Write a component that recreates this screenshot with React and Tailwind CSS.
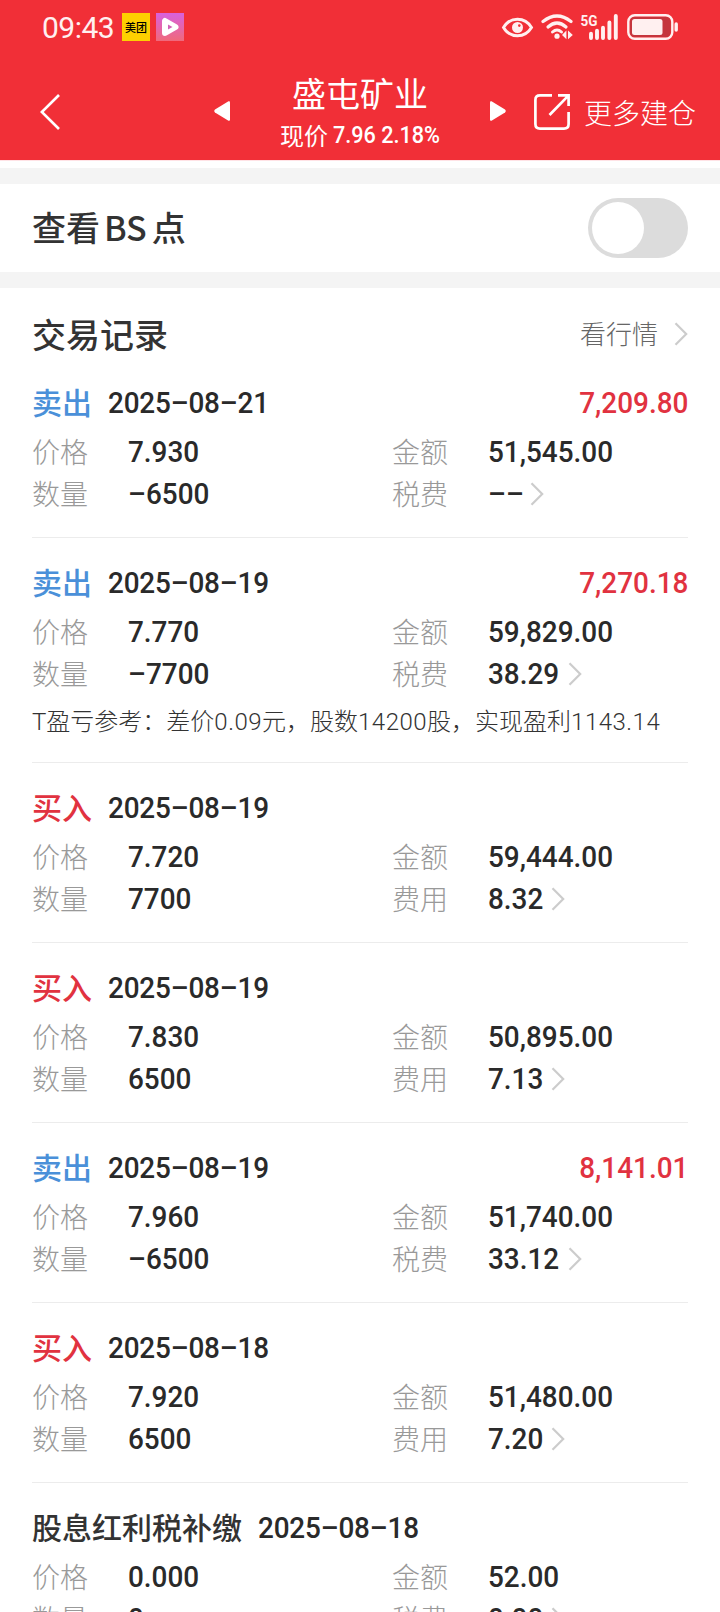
const DIGITS = "font-['Roboto','Noto_Sans_CJK_SC',sans-serif]";

const records = [
  { type: '卖出', date: '2025–08–21', profit: '7,209.80', price: '7.930', amount: '51,545.00', qty: '–6500', feeLabel: '税费', fee: '––' },
  { type: '卖出', date: '2025–08–19', profit: '7,270.18', price: '7.770', amount: '59,829.00', qty: '–7700', feeLabel: '税费', fee: '38.29', note: true },
  { type: '买入', date: '2025–08–19', price: '7.720', amount: '59,444.00', qty: '7700', feeLabel: '费用', fee: '8.32' },
  { type: '买入', date: '2025–08–19', price: '7.830', amount: '50,895.00', qty: '6500', feeLabel: '费用', fee: '7.13' },
  { type: '卖出', date: '2025–08–19', profit: '8,141.01', price: '7.960', amount: '51,740.00', qty: '–6500', feeLabel: '税费', fee: '33.12' },
  { type: '买入', date: '2025–08–18', price: '7.920', amount: '51,480.00', qty: '6500', feeLabel: '费用', fee: '7.20' },
  { type: '股息红利税补缴', date: '2025–08–18', price: '0.000', amount: '52.00', qty: '0', feeLabel: '税费', fee: '0.00' },
];

const typeColors = { 卖出: 'text-[#4a90d9]', 买入: 'text-[#e13240]' };

function Chevron({ className }) {
  return (
    <svg className={className} width="14" height="24" viewBox="0 0 14 24" fill="none" stroke="#cccccc" strokeWidth="2.2">
      <path d="M1.5 1.2 L12.2 12 L1.5 22.8" />
    </svg>
  );
}

function Num({ children, className = 'origin-left text-[#2a2a2a]' }) {
  return (
    <span className={`${DIGITS} scale-x-[0.93] pb-0.5 text-[30px] font-medium ${className}`}>
      {children}
    </span>
  );
}

function Field({ label, value, link }) {
  return (
    <div className="flex h-[42px] w-[360px] shrink-0 items-center">
      <span className="w-24 pt-[3px] text-[28px] font-light text-[#999999]">{label}</span>
      <Num>{value}</Num>
      {link && <Chevron className="ml-[3px]" />}
    </div>
  );
}

function Figure({ children }) {
  return <span className="tracking-[0.5px]">{children}</span>;
}

function Note() {
  return (
    <p className="mt-2.5 text-2xl leading-[35px] font-light whitespace-nowrap text-[#333333]">
      T盈亏参考：差价<Figure>0.09</Figure>元，股数<Figure>14200</Figure>股，实现盈利<Figure>1143.14</Figure>
    </p>
  );
}

function Record({ r }) {
  return (
    <div className="mx-8 border-b border-[#ececec] pt-[22px] pb-[22px] whitespace-nowrap">
      <div className="mb-1.5 flex h-[45px] items-center pt-0.5">
        <span className={`mr-4 text-[30px] font-medium ${typeColors[r.type] || 'text-[#333333]'}`}>{r.type}</span>
        <Num className="origin-left tracking-[-0.2px] text-[#2a2a2a]">{r.date}</Num>
        {r.profit && <Num className="ml-auto origin-right text-[#e13240]">{r.profit}</Num>}
      </div>
      <div className="flex">
        <Field label="价格" value={r.price} />
        <Field label="金额" value={r.amount} />
      </div>
      <div className="flex">
        <Field label="数量" value={r.qty} />
        <Field label={r.feeLabel} value={r.fee} link />
      </div>
      {r.note && <Note />}
    </div>
  );
}

function StatusBar() {
  return (
    <div className="flex h-[54px] items-center pr-[41px] pl-[42px] text-[#fff0f0]">
      <span className={`${DIGITS} w-20 text-[30px] tracking-[-0.5px]`}>09:43</span>
      <span className="flex size-7 items-center justify-center bg-[#fed000] text-[11px] font-medium whitespace-nowrap text-black">美团</span>
      <svg className="ml-1.5" width="28" height="28" viewBox="0 0 28 28">
        <defs>
          <linearGradient id="player" x1="0" y1="0" x2="0" y2="1">
            <stop offset="0" stopColor="#d861de" />
            <stop offset="1" stopColor="#f0697b" />
          </linearGradient>
        </defs>
        <rect width="28" height="28" fill="url(#player)" />
        <path d="M9 8 V20 L19.5 14 Z" fill="#fff" stroke="#fff" strokeWidth="6" strokeLinejoin="round" />
        <path d="M12 11.5 V16.5 L16.5 14 Z" fill="#d163b8" />
      </svg>
      <svg className="ml-auto" width="178" height="30" viewBox="502 12 178 30" fill="none" stroke="currentColor">
        <path d="M504.5 27.5 C511 16.5 526 16.5 532.5 27.5 C526 38.5 511 38.5 504.5 27.5 Z" strokeWidth="2.9" />
        <circle cx="518.5" cy="27.5" r="5.5" fill="currentColor" stroke="none" />
        <circle cx="520.3" cy="25.6" r="1.3" fill="#f12f37" stroke="none" />
        <path d="M544 21.5 Q558 10.5 572 21.5" strokeWidth="3.2" strokeLinecap="round" />
        <path d="M549 27 Q558 19 567 27" strokeWidth="3.2" strokeLinecap="round" />
        <path d="M553.5 32 Q558 28 562.5 32" strokeWidth="3" strokeLinecap="round" />
        <circle cx="558" cy="36.2" r="2.6" fill="currentColor" stroke="none" />
        <path d="M563 35 L567.4 30.5 V39.2 Z M569 30.5 L573.8 35 L569 39.2 Z" fill="currentColor" stroke="none" />
        <text x="581.5" y="26.3" fontSize="15" fontWeight="700" fill="currentColor" stroke="none" textLength="17" lengthAdjust="spacingAndGlyphs" fontFamily="Roboto">5G</text>
        <path d="M592 33.8 V38 M598 30.8 V38 M604 27.8 V38 M610.4 22.5 V38 M616.8 16 V38" strokeWidth="3.9" strokeLinecap="round" />
        <rect x="629.3" y="15.3" width="44" height="23.4" rx="6.5" strokeWidth="2.4" />
        <rect x="631" y="17" width="40.5" height="20" rx="4.5" fill="#a93a41" stroke="none" opacity="0.6" />
        <rect x="633" y="19" width="30.5" height="16" rx="2.5" fill="currentColor" stroke="none" />
        <path d="M677.2 24 V30" strokeWidth="3.4" strokeLinecap="round" />
      </svg>
    </div>
  );
}

function TitleBar() {
  return (
    <div className="flex h-[106px] items-center pr-6 pl-10 text-white">
      <svg className="mt-2.5 shrink-0" width="20" height="36" viewBox="0 0 20 36" fill="none" stroke="currentColor" strokeWidth="2.7">
        <path d="M19 1 L1.8 18 L19 35" />
      </svg>
      <svg className="mt-2 ml-[154px] shrink-0" width="16" height="20" viewBox="0 0 16 20" fill="currentColor">
        <path d="M14.5 0.3 Q16 -0.3 16 1.5 V18.5 Q16 20.3 14.5 19.7 L1 11.5 Q-0.5 10 1 8.5 Z" />
      </svg>
      <div className="flex w-[260px] shrink-0 flex-col items-center pt-3 whitespace-nowrap">
        <span className="text-[34px] leading-[44px]">盛屯矿业</span>
        <div className="flex h-10 items-center text-2xl">
          <span>现价</span>
          <span className={`${DIGITS} -mr-3 ml-[5px] origin-left scale-x-[0.9] font-medium`}>7.96 2.18%</span>
        </div>
      </div>
      <svg className="mt-2 shrink-0" width="16" height="20" viewBox="0 0 16 20" fill="currentColor">
        <path d="M1.5 0.3 Q0 -0.3 0 1.5 V18.5 Q0 20.3 1.5 19.7 L15 11.5 Q16.5 10 15 8.5 Z" />
      </svg>
      <svg className="mt-2.5 ml-7 shrink-0" width="36" height="36" viewBox="0 0 36 36" fill="none" stroke="currentColor" strokeWidth="2.7">
        <path d="M18 1.4 H6 Q1.4 1.4 1.4 6 V30 Q1.4 34.6 6 34.6 H30 Q34.6 34.6 34.6 30 V18" />
        <path d="M24 1.4 H34.6 V12 M34.6 1.4 L15.5 21" />
      </svg>
      <span className="mt-2.5 ml-3.5 text-[28px] font-light whitespace-nowrap">更多建仓</span>
    </div>
  );
}

export default function App() {
  return (
    <div className="h-[1612px] w-[720px] overflow-hidden bg-white font-['Noto_Sans_CJK_SC',sans-serif]">
      <header className="h-40 bg-[#f12f37]">
        <StatusBar />
        <TitleBar />
      </header>
      <div className="h-2 border-t border-[#ffe3e6]" />
      <div className="h-4 bg-[#f4f4f4]" />
      <section className="flex h-[88px] items-center justify-between px-8">
        <h2 className="pb-[3px] text-[34px] font-medium text-[#333333]">
          查看<span className="mr-[5px] ml-1">BS</span>点
        </h2>
        <div className="h-[60px] w-[100px] rounded-full bg-[#dcdcdc] p-1">
          <div className="size-[52px] rounded-full bg-white" />
        </div>
      </section>
      <div className="h-4 bg-[#f4f4f4]" />
      <div className="flex h-[70px] items-center px-8 pt-[21px]">
        <h2 className="text-[34px] font-medium text-[#333333]">交易记录</h2>
        <span className="mr-4 ml-auto pb-0.5 text-[26px] font-light text-[#666666]">看行情</span>
        <Chevron />
      </div>
      <main className={`${DIGITS}`}>
        {records.map((r, i) => (
          <Record key={i} r={r} />
        ))}
      </main>
    </div>
  );
}
